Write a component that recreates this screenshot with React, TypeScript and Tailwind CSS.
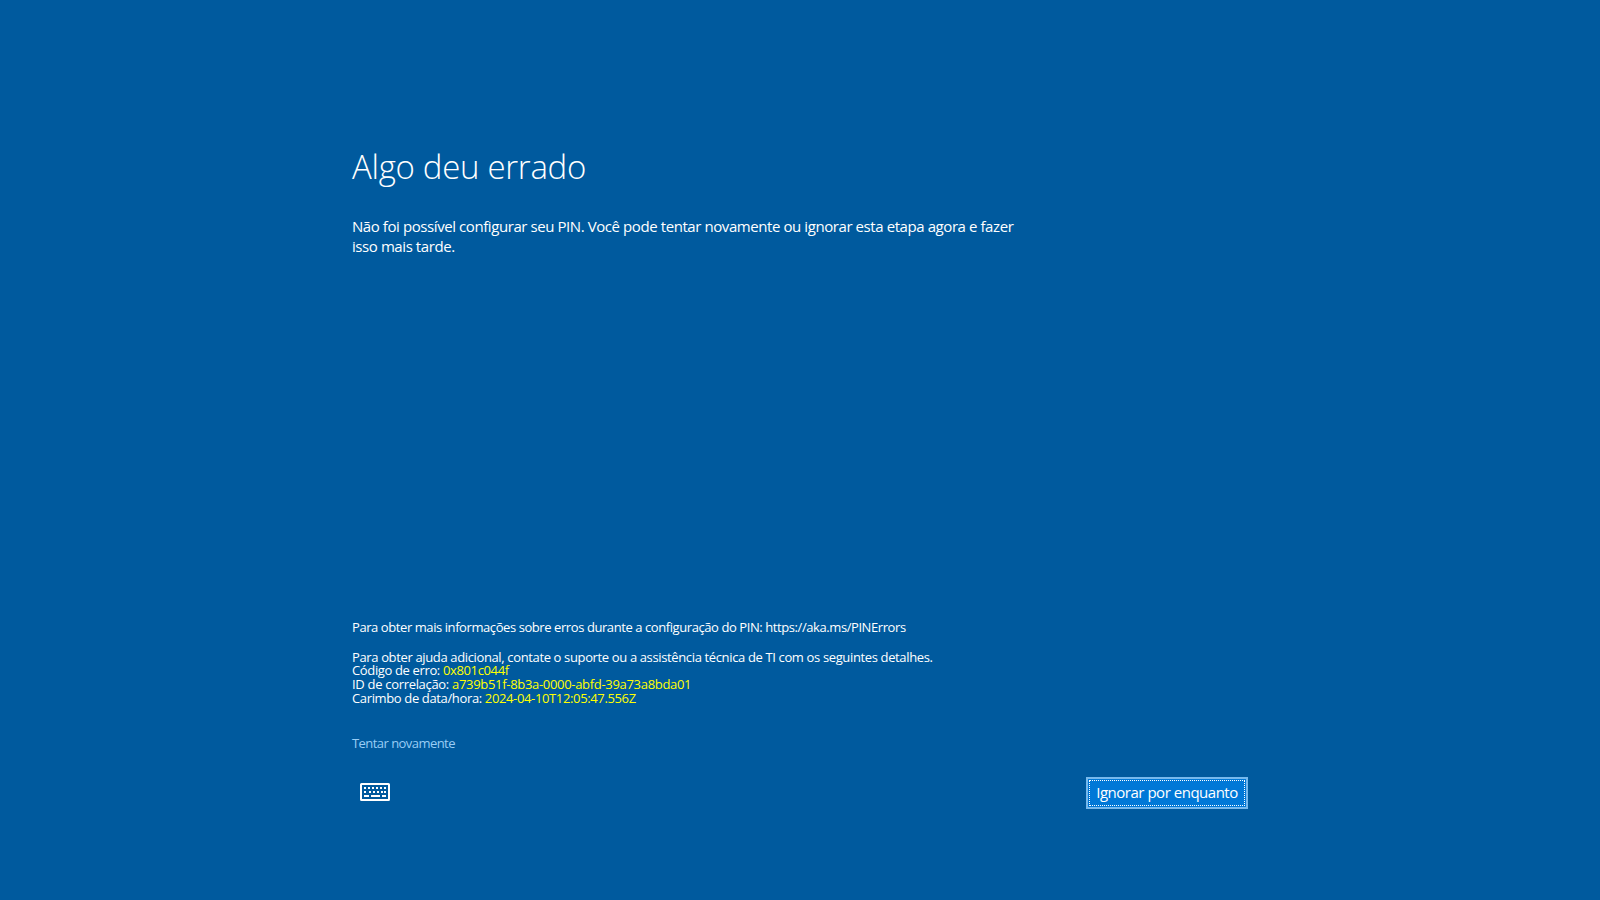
function KeyboardIcon() {
  const top = [4, 8, 12, 16, 20, 24]
  const mid = [4, 9, 13, 17, 21, 24]
  return (
    <svg width="30" height="18" viewBox="0 0 30 18" fill="none">
      <rect x="1" y="1" width="28" height="16" rx="0.5" stroke="white" strokeWidth="2" />
      {top.map((x) => (
        <rect key={x} x={x} y="4" width="2" height="2" fill="white" />
      ))}
      {mid.map((x) => (
        <rect key={x} x={x} y="8" width="2" height="2" fill="white" />
      ))}
      <rect x="4" y="12" width="5" height="2" fill="white" />
      <rect x="11" y="12" width="9" height="2" fill="white" />
      <rect x="22" y="12" width="4" height="2" fill="white" />
    </svg>
  )
}

export default function App() {
  return (
    <div className="flex h-[900px] w-[1600px] flex-col bg-[#005a9e] pl-[352px] font-['Open_Sans','Noto_Sans',sans-serif] text-white">
      <h1 className="mt-[143px] text-[33px] leading-[48px] font-light tracking-[-0.3px]">
        Algo deu errado
      </h1>
      <p className="mt-[25px] w-[680px] text-[15px] leading-[20px] tracking-[-0.42px]">
        Não foi possível configurar seu PIN. Você pode tentar novamente ou ignorar esta etapa agora e fazer isso mais tarde.
      </p>

      <div className="mt-[364px] text-[13px] leading-[14px] tracking-[-0.36px]">
        <p className="tracking-[-0.42px]">Para obter mais informações sobre erros durante a configuração do PIN: https://aka.ms/PINErrors</p>
        <p className="mt-[17px] leading-[12px]">Para obter ajuda adicional, contate o suporte ou a assistência técnica de TI com os seguintes detalhes.</p>
        <p>Código de erro: <span className="text-[#ffff00]">0x801c044f</span></p>
        <p className="tracking-[-0.31px]">ID de correlação: <span className="text-[#ffff00]">a739b51f-8b3a-0000-abfd-39a73a8bda01</span></p>
        <p>Carimbo de data/hora: <span className="text-[#ffff00]">2024-04-10T12:05:47.556Z</span></p>
      </div>

      <a className="mt-[29px] text-[13px] leading-[18px] tracking-[-0.55px] text-[#99cdf5]">Tentar novamente</a>

      <div className="mt-[25px] flex w-[896px] items-center justify-between">
        <div className="mb-[2px] ml-[8px] flex">
          <KeyboardIcon />
        </div>
        <button className="h-[32px] w-[162px] border-2 border-[#76b9ed] bg-[#0078d7] pb-[2px] text-[15px] tracking-[-0.48px] outline-1 -outline-offset-4 outline-white outline-dotted">
          Ignorar por enquanto
        </button>
      </div>
    </div>
  )
}
